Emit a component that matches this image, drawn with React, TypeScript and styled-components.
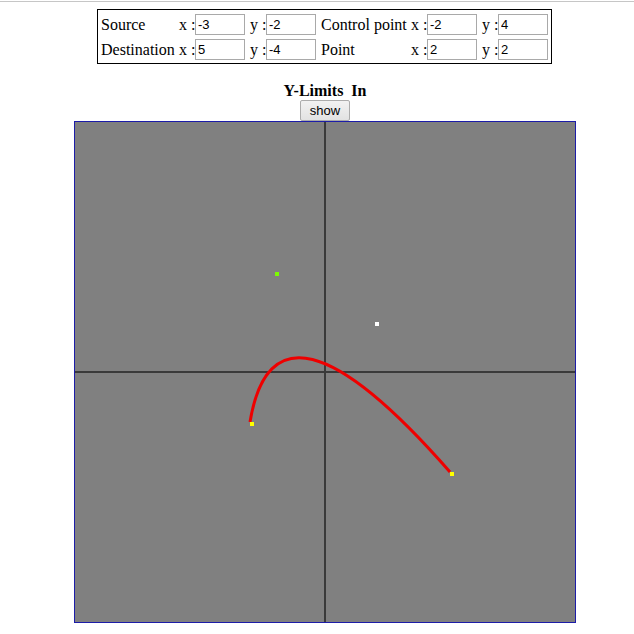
import React from "react";
import styled, { createGlobalStyle } from "styled-components";

const GlobalStyle = createGlobalStyle`
  html, body {
    margin: 0;
    padding: 0;
    background: #ffffff;
    overflow: hidden;
  }
  body {
    font-family: "Liberation Serif", "Times New Roman", serif;
    color: #000;
  }
`;

const TopRule = styled.div`
  height: 1px;
  margin-top: 1px;
  background: #c6c6c6;
  width: 634px;
`;

const Page = styled.div`
  width: 650px;
  display: flex;
  flex-direction: column;
  align-items: center;
  padding-top: 7px;
`;

const Panel = styled.div`
  border: 1px solid #000;
  padding: 2px 3px 1px 3px;
  margin-right: 1px;
  display: flex;
  flex-direction: column;
`;

const Row = styled.div`
  display: grid;
  grid-template-columns: 78px 16px 50px 21px 50px 5px 90px 16px 50px 21px 50px;
  align-items: center;
  height: 25px;
`;

const Label = styled.span`
  font-size: 16px;
  line-height: 18px;
  white-space: nowrap;
`;

const Axis = styled.span<{ $pad?: number }>`
  font-size: 16px;
  line-height: 18px;
  white-space: pre;
  padding-left: ${(p) => p.$pad ?? 0}px;
`;

const CoordInput = styled.input`
  box-sizing: border-box;
  width: 50px;
  height: 21px;
  margin: 0;
  padding: 1px 2px;
  border: 1px solid #a9a9a9;
  font-family: "Liberation Sans", Arial, sans-serif;
  font-size: 13px;
  color: #000;
  background: #fff;
  outline: none;
`;

const Heading = styled.div`
  margin-top: 17px;
  font-weight: bold;
  font-size: 16px;
  line-height: 19px;
  white-space: pre;
`;

const ShowButton = styled.button`
  box-sizing: border-box;
  width: 50px;
  height: 21px;
  margin: 0;
  padding: 0;
  border: 1px solid #acacac;
  border-radius: 2px;
  background: linear-gradient(#f2f2f2, #e2e2e2);
  font-family: "Liberation Sans", Arial, sans-serif;
  font-size: 13px;
  color: #000;
`;

const Board = styled.div`
  width: 500px;
  height: 500px;
  border: 1px solid #1c1ca8;
  background: #808080;
  display: flex;
`;

type P = { x: number; y: number };
const SCALE = 25;
const toPx = (p: P) => ({ x: 250 + p.x * SCALE, y: 250 - p.y * SCALE });

const source: P = { x: -3, y: -2 };
const control: P = { x: -2, y: 4 };
const dest: P = { x: 5, y: -4 };
const point: P = { x: 2, y: 2 };

const Marker: React.FC<{ p: P; color: string }> = ({ p, color }) => {
  const q = toPx(p);
  return <rect x={q.x} y={q.y} width={4} height={4} fill={color} />;
};

const Plot: React.FC = () => {
  const s = toPx(source);
  const c = toPx(control);
  const d = toPx(dest);
  return (
    <svg width={500} height={500} viewBox="0 0 500 500">
      <line x1={250} y1={0} x2={250} y2={500} stroke="#3a3a3a" strokeWidth={2} />
      <line x1={0} y1={250} x2={500} y2={250} stroke="#3a3a3a" strokeWidth={2} />
      <path
        d={`M ${s.x} ${s.y} Q ${c.x} ${c.y} ${d.x} ${d.y}`}
        fill="none"
        stroke="#ee0000"
        strokeWidth={3}
      />
      <Marker p={control} color="#7cfc00" />
      <Marker p={point} color="#ffffff" />
      <Marker p={source} color="#ffff00" />
      <Marker p={dest} color="#ffff00" />
    </svg>
  );
};

const CoordRow: React.FC<{
  label: string;
  a: P;
  label2: string;
  b: P;
}> = ({ label, a, label2, b }) => (
  <Row>
    <Label>{label}</Label>
    <Axis>x :</Axis>
    <CoordInput defaultValue={String(a.x)} />
    <Axis $pad={5}>y :</Axis>
    <CoordInput defaultValue={String(a.y)} />
    <span />
    <Label>{label2}</Label>
    <Axis>x :</Axis>
    <CoordInput defaultValue={String(b.x)} />
    <Axis $pad={5}>y :</Axis>
    <CoordInput defaultValue={String(b.y)} />
  </Row>
);

export default function App() {
  return (
    <>
      <GlobalStyle />
      <TopRule />
      <Page>
        <Panel>
          <CoordRow label="Source" a={source} label2="Control point" b={control} />
          <CoordRow label="Destination" a={dest} label2="Point" b={point} />
        </Panel>
        <Heading>{"Y-Limits  In"}</Heading>
        <ShowButton>show</ShowButton>
        <Board>
          <Plot />
        </Board>
      </Page>
    </>
  );
}
